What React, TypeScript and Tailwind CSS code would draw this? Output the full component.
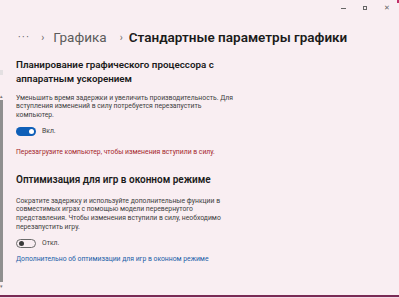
import React from 'react';

const Toggle: React.FC<{ on: boolean }> = ({ on }) =>
  on ? (
    <div className="w-[20px] h-[9px] rounded-full bg-[#0f5fb8] flex items-center justify-end pr-[2px]">
      <div className="w-[5px] h-[5px] rounded-full bg-white" />
    </div>
  ) : (
    <div className="w-[20px] h-[9px] rounded-full border border-[#6a6a6a] flex items-center pl-[2px]">
      <div className="w-[5px] h-[5px] rounded-full bg-[#3a3a3a]" />
    </div>
  );

const App: React.FC = () => {
  return (
    <div
      className="w-[399px] h-[298px] bg-[#f9eef2] text-[#1b1b1b] overflow-hidden relative flex flex-col whitespace-nowrap"
      style={{ fontFamily: 'Roboto, "Noto Sans", sans-serif' }}
    >
      {/* title bar */}
      <div className="h-[22px] flex justify-end items-start pt-[6px] pr-[9px] gap-[17px] text-[#666] shrink-0">
        <span className="w-[5px] h-px bg-[#666] mt-[2px]" />
        <span className="w-[4px] h-[4px] border border-[#666] mt-[0px]" />
        <span className="text-[7px] leading-[5px]">✕</span>
      </div>
      <div className="absolute top-0 right-0 w-[2px] h-[3px] bg-[#c0306a]" />

      <div className="flex flex-1 min-h-0">
        {/* scrollbar */}
        <div className="w-[4px] flex flex-col items-start pt-[48px] pb-[6px] shrink-0">
          <div className="w-[3px] h-[5px] bg-[#e4e0e2]" />
          <div className="h-[18px]" />
          <div className="text-[5px] leading-[6px] text-[#777]">▴</div>
          <div className="flex-1 w-[3px] bg-[#8f8f8f] my-[1px]" />
          <div className="text-[5px] leading-[6px] text-[#777]">▾</div>
        </div>

        <div className="flex-1 pl-[12px] pr-[6px]">
          {/* breadcrumb */}
          <div className="flex items-center h-[30px]">
            <span className="text-[10px] text-[#555] ml-[2px] tracking-[1.5px]">···</span>
            <span className="text-[10px] text-[#666] ml-[11px] mr-[9px]">›</span>
            <span className="text-[13.5px] text-[#5b5b5b]">Графика</span>
            <span className="text-[10px] text-[#666] ml-[13px] mr-[6px]">›</span>
            <span className="text-[13.5px] font-semibold text-[#1b1b1b]">Стандартные параметры графики</span>
          </div>

          <div className="mt-[6px] text-[9.8px] font-semibold leading-[13.5px]">
            <div>Планирование графического процессора с</div>
            <div>аппаратным ускорением</div>
          </div>
          <div className="mt-[8.5px] text-[6.8px] leading-[8.8px] text-[#404040]">
            <div>Уменьшить время задержки и увеличить производительность. Для</div>
            <div>вступления изменений в силу потребуется перезапустить</div>
            <div>компьютер.</div>
          </div>
          <div className="flex items-center gap-[6px] mt-[7px] h-[9px]">
            <Toggle on />
            <span className="text-[6.8px] text-[#404040]">Вкл.</span>
          </div>
          <div className="mt-[12px] text-[6.8px] leading-[8.8px] text-[#a4262c]">
            Перезагрузите компьютер, чтобы изменения вступили в силу.
          </div>

          <div className="mt-[16px] text-[10px] font-semibold leading-[13.5px]">
            Оптимизация для игр в оконном режиме
          </div>
          <div className="mt-[10.5px] text-[6.8px] leading-[8.8px] text-[#404040]">
            <div>Сократите задержку и используйте дополнительные функции в</div>
            <div>совместимых играх с помощью модели перевернутого</div>
            <div>представления. Чтобы изменения вступили в силу, необходимо</div>
            <div>перезапустить игру.</div>
          </div>
          <div className="flex items-center gap-[6px] mt-[7px] h-[9px]">
            <Toggle on={false} />
            <span className="text-[6.8px] text-[#404040]">Откл.</span>
          </div>
          <div className="mt-[7px] text-[6.8px] leading-[8.8px] text-[#2060a8]">
            Дополнительно об оптимизации для игр в оконном режиме
          </div>
        </div>
      </div>

      <div className="h-[2px] bg-[#7a2a55] shrink-0" />
      <div className="h-[1px] bg-[#f3d8e4] shrink-0" />
    </div>
  );
};

export default App;
